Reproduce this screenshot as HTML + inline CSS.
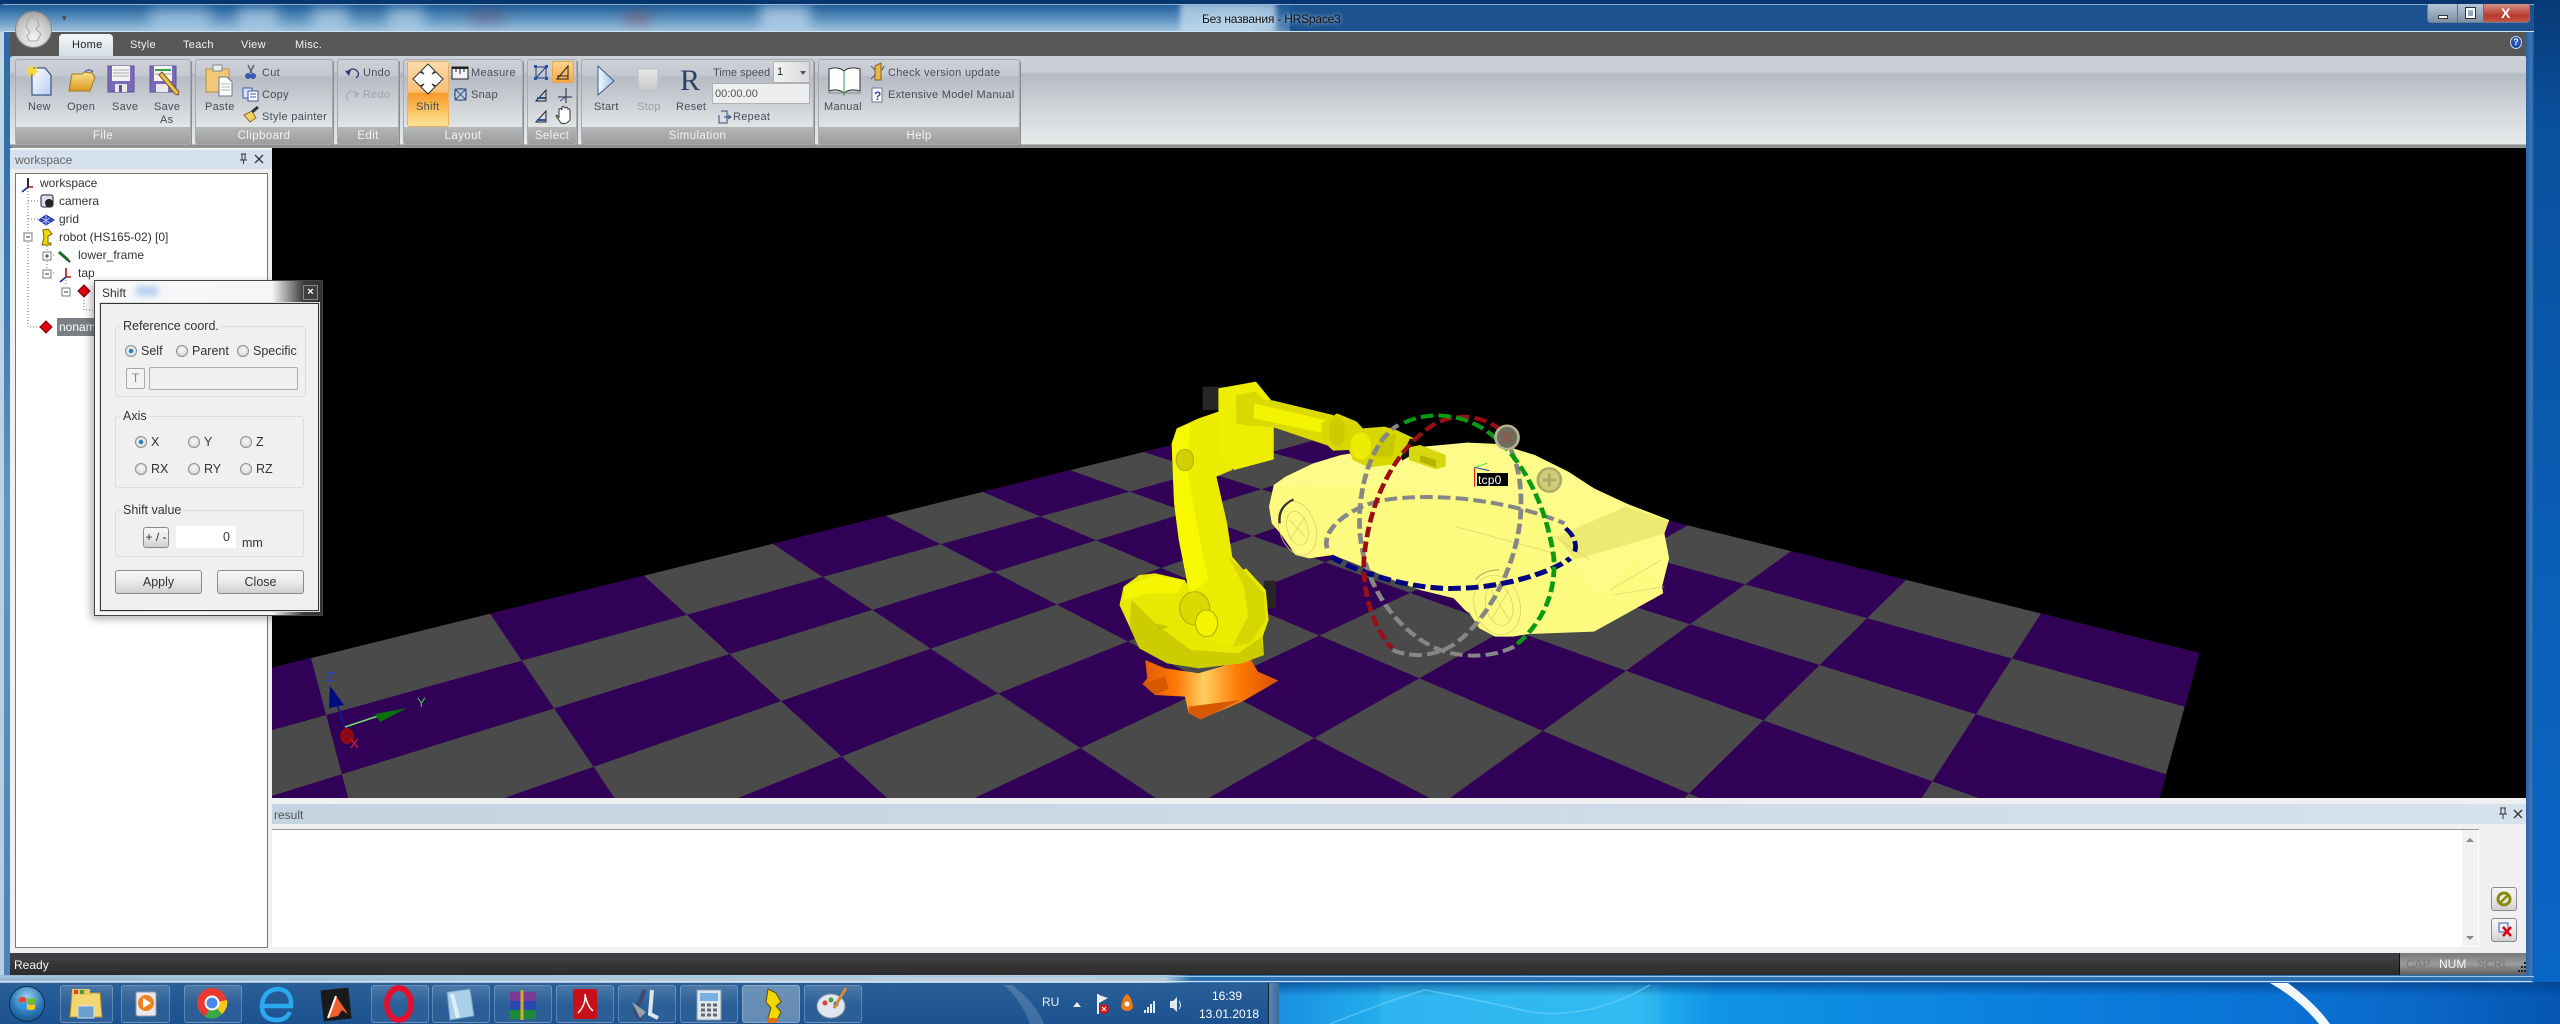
<!DOCTYPE html>
<html><head><meta charset="utf-8"><title>HRSpace3</title>
<style>
html,body{margin:0;padding:0;width:2560px;height:1024px;overflow:hidden;background:#0a6ccf;font-family:"Liberation Sans","Noto Sans CJK SC",sans-serif}
div,span,svg{position:absolute}
.t{white-space:nowrap;line-height:1;font-size:11px;letter-spacing:.3px;color:#454d5a}
.g{top:59px;height:86px;border:1px solid #a8aaae;border-radius:3px;box-sizing:border-box;background:linear-gradient(#cdd0d7 0,#c6c9d1 15px,#b6bbc5 17px,#ced2d6 45px,#e2e6e7 68px);overflow:hidden;box-shadow:1px 1px 0 #8b8d90}
.g b{position:absolute;left:0;right:0;bottom:0;height:17px;background:linear-gradient(#b4b6b8,#9b9d9f);color:#f2f2f2;font:11.5px/18px "Liberation Sans",sans-serif;text-align:center;letter-spacing:.4px}
.tr{font-size:12px;letter-spacing:0;color:#333}
.d{font-size:12.5px;letter-spacing:0;color:#333}
.fs{border:1px solid #dcdcdc;border-radius:3px;box-sizing:border-box}
.r{width:12px;height:12px;border-radius:50%;border:1px solid #8d8d8d;box-sizing:border-box;background:radial-gradient(circle at 50% 40%,#f8f8f8,#cfcfcf)}
.r.on{background:radial-gradient(circle,#1b6ea8 0,#2f8fc8 28%,#e8e8e8 36%,#dcdcdc)}
.btn{border:1px solid #8a8a8a;border-radius:3px;box-sizing:border-box;background:linear-gradient(#f6f6f6 0,#ececec 45%,#cfcfcf 100%);text-align:center;font-size:12.5px;color:#333}
.tb{top:985px;height:38px;width:58px;border:1px solid rgba(255,255,255,.24);border-radius:3px;box-sizing:border-box;background:linear-gradient(rgba(255,255,255,.16),rgba(255,255,255,.04) 55%,rgba(255,255,255,.08))}
</style></head><body>

<!-- desktop bottom right -->
<div style="left:1279px;top:975px;width:1281px;height:49px;background:linear-gradient(90deg,#1a90e2 0,#24b2ef 9%,#27b8f3 28%,#1094e6 34%,#0b7edc 60%,#0a73d4 78%,#0a66c6 90%,#0556b2 100%)"></div>
<div style="left:1279px;top:982px;width:1281px;height:14px;background:linear-gradient(rgba(3,60,130,.65),rgba(3,60,130,0))"></div>
<svg style="left:1279px;top:975px" width="1281" height="49" viewBox="1279 975 1281 49">
<path d="M2270,983 L2288,983 Q2316,1004 2330,1024 L2319,1024 Q2300,1000 2270,983Z" fill="#f2f8fd"/>
<path d="M1330,1024 Q1390,1000 1425,990 Q1480,1000 1530,1012 Q1590,1020 1650,985" fill="none" stroke="#6fd2f8" stroke-width="1.5" opacity=".6"/>
<path d="M1380,985 L1660,985 L1660,1024 L1380,1024Z" fill="#fff" opacity=".05"/>
</svg>
<div style="left:2534px;top:0;width:26px;height:982px;background:linear-gradient(#073a75 0,#0a4f9c 12%,#0a5fb8 60%,#0a66c6 100%)"></div>

<!-- title / glass -->
<div style="left:0;top:0;width:2534px;height:32px;overflow:hidden;background:#1c5290;">
 <div style="left:0;top:0;width:1290px;height:32px;background:linear-gradient(#1a5592 0,#2a679f 25%,#6fa0c9 70%,#a5c6e0 100%)"></div>
 <div style="left:1250px;top:0;width:220px;height:32px;background:linear-gradient(90deg,rgba(28,82,144,0),#1c5290 30%)"></div>
 <div style="left:150px;top:8px;width:60px;height:22px;background:#c8e0f2;filter:blur(7px);opacity:.5"></div>
 <div style="left:238px;top:8px;width:40px;height:22px;background:#c8e0f2;filter:blur(6px);opacity:.55"></div>
 <div style="left:312px;top:8px;width:36px;height:22px;background:#c8e0f2;filter:blur(6px);opacity:.55"></div>
 <div style="left:388px;top:8px;width:36px;height:22px;background:#c8e0f2;filter:blur(6px);opacity:.55"></div>
 <div style="left:470px;top:8px;width:34px;height:16px;background:#704060;filter:blur(7px);opacity:.35"></div>
 <div style="left:625px;top:12px;width:26px;height:12px;background:#a03030;filter:blur(6px);opacity:.35"></div>
 <div style="left:760px;top:5px;width:50px;height:25px;background:#d0e4f4;filter:blur(6px);opacity:.6"></div>
 <div style="left:1180px;top:3px;width:96px;height:30px;background:#c4dcf0;filter:blur(3px);opacity:.75"></div>
 <div style="left:0;top:0;width:2534px;height:4px;background:#07366f"></div>
 <div style="left:4px;top:31px;width:2530px;height:1px;background:#cfe3f3"></div>
</div>
<div style="left:3px;top:4px;width:2531px;height:1px;background:#b9cfe2;opacity:.7"></div>
<div class="t" style="left:1202px;top:13px;font-size:12px;letter-spacing:-.2px;color:#111;text-shadow:0 0 5px #dbeeff">Без названия - HRSpace3</div>
<!-- caption buttons -->
<div style="left:2427px;top:4px;width:103px;height:19px;border:1px solid #6a7f95;border-top:0;border-radius:0 0 4px 4px;box-sizing:border-box;overflow:hidden;background:linear-gradient(#b5c6d6,#7d90a4)">
 <div style="left:56px;top:0;width:47px;height:19px;background:linear-gradient(#d69088,#b83a2e 60%,#c45a48)"></div>
 <div style="left:29px;top:0;width:1px;height:19px;background:#5d7085"></div>
 <div style="left:55px;top:0;width:1px;height:19px;background:#5d7085"></div>
 <div style="left:10px;top:11px;width:10px;height:4px;background:#fff;border:1px solid #333;box-sizing:border-box"></div>
 <div style="left:38px;top:4px;width:9px;height:10px;border:2px solid #fff;outline:1px solid #333;box-sizing:border-box"></div>
 <div class="t" style="left:73px;top:2px;font-size:14px;font-weight:bold;color:#fff;letter-spacing:0">X</div>
</div>

<!-- window left frame -->
<div style="left:0;top:32px;width:4px;height:952px;background:linear-gradient(#c4d6e4,#b7cde0)"></div>
<div style="left:4px;top:32px;width:6px;height:948px;background:linear-gradient(#2a6ba6,#3a7cb6 30%,#5d97c8 50%,#4883bb)"></div>

<!-- ribbon tab row -->
<div style="left:10px;top:32px;width:2517px;height:24px;background:#575757"></div>
<div style="left:59px;top:34px;width:54px;height:22px;border-radius:4px 4px 0 0;background:linear-gradient(#f3f6f8,#d3dee4)"></div>
<div class="t" style="left:72px;top:40px;color:#222">Home</div>
<div class="t" style="left:130px;top:40px;color:#f2f2f2">Style</div>
<div class="t" style="left:183px;top:40px;color:#f2f2f2">Teach</div>
<div class="t" style="left:241px;top:40px;color:#f2f2f2">View</div>
<div class="t" style="left:295px;top:40px;color:#f2f2f2">Misc.</div>
<!-- orb -->
<div style="left:15px;top:11px;width:37px;height:37px;border-radius:50%;background:radial-gradient(circle at 50% 75%,#f4f4f4,#c9c9c9 55%,#8f8f8f);border:1px solid #888;box-sizing:border-box"></div>
<svg style="left:15px;top:11px" width="37" height="37"><path d="M16,5 L22,8 L24,14 L21,18 L26,23 L22,30 L14,30 L12,25 L15,21 L11,16 L13,9Z" fill="none" stroke="#a8a8a8"/></svg>
<div class="t" style="left:62px;top:14px;font-size:9px;color:#444;letter-spacing:0">▾</div>
<!-- help -->
<div style="left:2510px;top:36px;width:12px;height:13px;border-radius:50%;background:radial-gradient(#2a5cc0,#18409c);border:1px solid #c8d8f0;box-sizing:border-box;color:#fff;font:bold 9px/11px 'Liberation Sans',sans-serif;text-align:center">?</div>

<!-- ribbon body -->
<div style="left:10px;top:56px;width:2517px;height:92px;border-radius:3px;background:linear-gradient(#ccd0d8 0,#c8ccd4 16px,#b4bac4 18px,#c6cbd0 40px,#d6dadd 60px,#e6eaeb 88px,#8a8a8a 89px,#999 92px)"></div>
<div class="g" style="left:15px;width:176px"><b>File</b></div>
<div class="g" style="left:195px;width:138px"><b>Clipboard</b></div>
<div class="g" style="left:337px;width:62px"><b>Edit</b></div>
<div class="g" style="left:403px;width:120px"><b>Layout</b></div>
<div class="g" style="left:527px;width:50px"><b>Select</b></div>
<div class="g" style="left:581px;width:233px"><b>Simulation</b></div>
<div class="g" style="left:818px;width:202px"><b>Help</b></div>

<!-- Shift highlight -->
<div style="left:407px;top:61px;width:42px;height:66px;box-sizing:border-box;border:1px solid #e6b25c;border-radius:3px;background:linear-gradient(#fddcaa 0,#f9be74 47%,#f79a2c 49%,#fbc25e 75%,#fee49a 100%)"></div>
<div style="left:552px;top:61px;width:22px;height:22px;box-sizing:border-box;border:1px solid #e0aa50;border-radius:2px;background:linear-gradient(#fcd28e,#f8a840)"></div>

<svg style="left:0;top:56px" width="1040" height="75" viewBox="0 56 1040 75">
<defs>
<linearGradient id="fol" x1="0" y1="0" x2="0" y2="1"><stop offset="0" stop-color="#fbe08a"/><stop offset="1" stop-color="#d89a20"/></linearGradient>
<linearGradient id="pg" x1="0" y1="0" x2="1" y2="1"><stop offset="0" stop-color="#fff"/><stop offset="1" stop-color="#b8ccf0"/></linearGradient>
<linearGradient id="tri" x1="0" y1="0" x2="1" y2="0"><stop offset="0" stop-color="#f4f8fc"/><stop offset="1" stop-color="#a0c0e4"/></linearGradient>
<linearGradient id="sq" x1="0" y1="0" x2="0" y2="1"><stop offset="0" stop-color="#e4e6e8"/><stop offset="1" stop-color="#c8cacc"/></linearGradient>
</defs>
<!-- New -->
<path d="M32,68 L45,68 L51,75 L51,95 L32,95Z" fill="url(#pg)" stroke="#1e3a6e"/>
<path d="M32,65 L34,69 L38,65 L36,70 L39,72 L35,73 L36,77 L32,74 L28,77 L29,73 L25,72 L29,70 L26,65 L30,68Z" fill="#f8d838"/>
<!-- Open -->
<path d="M72,74 L82,74 L84,72 L92,73 L94,76 L95,77 L90,91 L69,91 Z" fill="url(#fol)" stroke="#a07a20"/>
<path d="M85,72 Q89,68 93,72" fill="none" stroke="#5a6aa0" stroke-width="1.5"/>
<!-- Save -->
<path d="M108,66 L134,66 L134,92 L108,92Z" fill="#7a68b8" stroke="#5f5098"/>
<rect x="112" y="66" width="18" height="15" fill="#f4f4f4"/><path d="M113,70H129M113,73H129M113,76H129" stroke="#aaa"/>
<rect x="115" y="84" width="12" height="8" fill="#e8e8e8"/><rect x="119" y="85" width="3" height="7" fill="#5f5098"/>
<!-- Save as -->
<path d="M150,66 L176,66 L176,92 L150,92Z" fill="#7a68b8" stroke="#5f5098"/>
<rect x="154" y="66" width="18" height="15" fill="#f4f4f4"/><path d="M155,70H171" stroke="#38a048" stroke-width="2"/><path d="M155,74H171" stroke="#aaa"/>
<rect x="156" y="84" width="12" height="8" fill="#e8e8e8"/>
<path d="M159,75 L162,72 L179,92 L178,95 L175,94Z" fill="#e8c050" stroke="#805020"/>
<!-- Paste -->
<path d="M206,69 L229,69 L229,92 L206,92Z" fill="#f0c878" stroke="#b89040" rx="2"/>
<rect x="213" y="65" width="9" height="6" fill="#e8eef4" stroke="#888"/>
<path d="M219,77 L227,77 L232,82 L232,96 L219,96Z" fill="#fff" stroke="#6a7a90"/><path d="M221,84H230M221,87H230M221,90H230" stroke="#b0b8c4"/>
<!-- Cut -->
<path d="M248,65 L252,73 M254,65 L250,73" stroke="#5a6478" stroke-width="1.5"/><circle cx="248" cy="76" r="3" fill="#3a5ab0"/><circle cx="253" cy="76" r="3" fill="#3a5ab0"/>
<!-- Copy -->
<rect x="243" y="88" width="9" height="10" fill="#d8e4f8" stroke="#3a5aa0"/><rect x="248" y="91" width="10" height="10" fill="#fff" stroke="#3a5aa0"/><path d="M250,94H256M250,97H256" stroke="#3a5aa0"/>
<!-- Painter -->
<path d="M244,115 L252,111 L256,118 L250,122 Z" fill="#f0d060" stroke="#907020"/><path d="M252,112 L258,107" stroke="#334" stroke-width="3"/>
<!-- Undo redo -->
<path d="M347,73 Q351,67 356,70 Q361,74 356,78" fill="none" stroke="#2a3a70" stroke-width="1.3"/><path d="M345,71 L351,70 L349,76Z" fill="#2a3a70"/>
<path d="M358,95 Q354,89 349,92 Q344,96 349,100" fill="none" stroke="#aab0b4" stroke-width="1.3"/><path d="M360,93 L354,92 L356,98Z" fill="#aab0b4"/>
<!-- Shift arrows -->
<g transform="translate(428 79)"><path d="M0,-15 L7,-8 L4,-5 L8,-7 L15,0 L8,7 L4,5 L7,8 L0,15 L-7,8 L-4,5 L-8,7 L-15,0 L-8,-7 L-4,-5 L-7,-8Z" fill="#fff" stroke="#333"/></g>
<!-- Measure -->
<rect x="452" y="67" width="16" height="12" fill="#f4f4f4" stroke="#222"/><path d="M452,68H468" stroke="#222" stroke-width="2"/><path d="M456,69V72M460,69V74M464,69V72" stroke="#222"/>
<!-- Snap -->
<rect x="455" y="89" width="11" height="11" fill="none" stroke="#3a5a90"/><path d="M455,89 L466,100 M466,89 L455,100" stroke="#3a5a90"/><circle cx="460.5" cy="94.5" r="6" fill="none" stroke="#3a5a90"/>
<!-- Select icons -->
<g fill="none" stroke="#1c3a7a"><rect x="536" y="67" width="10" height="11"/><path d="M536,78 L546,67"/></g><g fill="#2a50a0"><rect x="534" y="65" width="3" height="3"/><rect x="545" y="65" width="3" height="3"/><rect x="534" y="77" width="3" height="3"/><rect x="545" y="77" width="3" height="3"/></g>
<path d="M557,79 L568,66 L568,79Z M557,76H568" fill="none" stroke="#222"/>
<path d="M536,101 L546,90 L546,101Z" fill="none" stroke="#222"/><path d="M537,98H546" stroke="#2a50a0" stroke-width="2"/>
<path d="M566,88 V103 M558,97 H572" stroke="#223" fill="none"/><path d="M566,97 L560,101" stroke="#2a50a0"/>
<path d="M536,122 L546,111 L546,122Z" fill="none" stroke="#222"/><path d="M537,120H546" stroke="#2a50a0" stroke-width="2"/>
<path d="M559,118 L559,109 Q561,108 562,110 L562,107 Q564,106 565,108 Q567,106 568,109 Q570,108 570,111 L570,120 Q566,125 561,123 L556,116 Q557,114 559,118Z" fill="#fff" stroke="#333"/>
<!-- Start / Stop / R -->
<path d="M598,66 L614,81 L598,95Z" fill="url(#tri)" stroke="#3c5c8c"/>
<rect x="638" y="69" width="20" height="22" fill="url(#sq)" stroke="#bcbec0"/>
<!-- repeat -->
<path d="M721,111 H727 V123 H719 V115" fill="none" stroke="#2a4a80"/><path d="M724,117 L730,117 M728,115 L731,117 L728,119" stroke="#2a4a80" fill="none"/>
<!-- Manual book -->
<path d="M829,69 Q838,66 844,71 Q850,66 860,69 L860,91 Q850,88 844,93 Q838,88 829,91Z" fill="#fff" stroke="#333"/><path d="M844,71V96" stroke="#28a048"/><path d="M829,91 L829,93 L860,93 L860,91" stroke="#888" fill="none"/>
<!-- check icon -->
<path d="M875,66 L881,63 L881,80 L875,80Z" fill="#e8b840" stroke="#806020"/><path d="M871,66 L875,70 M884,66 L882,70 M871,79 L875,75" stroke="#556"/>
<!-- ? -->
<rect x="872" y="88" width="10" height="14" fill="#fff" stroke="#6a7a90"/><text x="874" y="100" font-family="Liberation Sans" font-size="12" font-weight="bold" fill="#2850a8">?</text>
</svg>

<div class="t" style="left:28px;top:102px">New</div>
<div class="t" style="left:67px;top:102px">Open</div>
<div class="t" style="left:112px;top:102px">Save</div>
<div class="t" style="left:154px;top:102px">Save</div>
<div class="t" style="left:160px;top:115px">As</div>
<div class="t" style="left:205px;top:102px">Paste</div>
<div class="t" style="left:262px;top:68px">Cut</div>
<div class="t" style="left:262px;top:90px">Copy</div>
<div class="t" style="left:262px;top:112px">Style painter</div>
<div class="t" style="left:363px;top:68px">Undo</div>
<div class="t" style="left:363px;top:90px;color:#a0a4a8">Redo</div>
<div class="t" style="left:416px;top:102px">Shift</div>
<div class="t" style="left:471px;top:68px">Measure</div>
<div class="t" style="left:471px;top:90px">Snap</div>
<div class="t" style="left:594px;top:102px">Start</div>
<div class="t" style="left:637px;top:102px;color:#9a9ea2">Stop</div>
<div class="t" style="left:676px;top:102px">Reset</div>
<div class="t" style="left:680px;top:66px;font:30px/1 'Liberation Serif',serif;color:#2b3f66;letter-spacing:0">R</div>
<div class="t" style="left:713px;top:68px;letter-spacing:0">Time speed</div>
<div style="left:773px;top:61px;width:37px;height:22px;border:1px solid #b0b0b0;box-sizing:border-box;background:linear-gradient(90deg,#f2f2f2,#d8dadc)"></div>
<div class="t" style="left:777px;top:67px;color:#222">1</div>
<div style="left:800px;top:71px;border:3px solid transparent;border-top:4px solid #555"></div>
<div style="left:712px;top:83px;width:98px;height:21px;border:1px solid #b0b0b0;box-sizing:border-box;background:#eceeef"></div>
<div class="t" style="left:715px;top:89px;color:#555;letter-spacing:0">00:00.00</div>
<div class="t" style="left:733px;top:112px">Repeat</div>
<div class="t" style="left:824px;top:102px">Manual</div>
<div class="t" style="left:888px;top:68px">Check version update</div>
<div class="t" style="left:888px;top:90px">Extensive Model Manual</div>

<!-- content background -->
<div style="left:10px;top:148px;width:2517px;height:805px;background:#f0f0f0"></div>

<!-- left panel -->
<div style="left:10px;top:150px;width:262px;height:19px;background:#d5e1ec"></div>
<div class="t tr" style="left:15px;top:154px;color:#666">workspace</div>
<svg style="left:236px;top:152px" width="30" height="14"><path d="M5,2H10M6,2V8M9,2V8M4,8H11M7.5,8V12" stroke="#333" fill="none"/><path d="M19,3 L27,11 M27,3 L19,11" stroke="#333" stroke-width="1.3"/></svg>
<div style="left:15px;top:173px;width:253px;height:775px;border:1px solid #777;box-sizing:border-box;background:#fff"></div>
<svg style="left:15px;top:173px" width="90" height="165" viewBox="15 173 90 165">
<g fill="none" stroke="#777" stroke-dasharray="1 2">
<path d="M28,188 V327 H40"/><path d="M28,201 H40 M28,219 H40"/><path d="M47,246 V273 M47,255 H55 M47,273 H55"/><path d="M66,280 V286 M84,300 V310 H94"/>
</g>
<!-- workspace axes -->
<path d="M28,178 V187 H33" fill="none" stroke="#b01010" stroke-width="1.6"/><path d="M28,187 L22,192" stroke="#1030a0" stroke-width="1.6"/><path d="M28,178 V187" stroke="#111" stroke-width="1.6"/>
<!-- camera -->
<rect x="41" y="195" width="12" height="12" rx="2" fill="#dde" stroke="#222"/><circle cx="49" cy="203" r="4" fill="#222"/>
<!-- grid -->
<path d="M39,220 L46,215 L54,220 L46,225Z" fill="#3848c8" stroke="#2030a0"/>
<path d="M42,218L50,223M46,215V225M50,218L42,223" stroke="#b8c0f0"/>
<!-- robot -->
<path d="M43,230 L48,229 L52,234 L48,236 L48,243 L51,243 V245 H42 L44,238 Z" fill="#f0d800" stroke="#806000"/>
<rect x="24" y="233" width="8" height="8" fill="#fff" stroke="#778"/><path d="M26,237H30" stroke="#333"/>
<!-- lower_frame -->
<rect x="43" y="252" width="8" height="8" fill="#fff" stroke="#778"/><path d="M45,256H49M47,254V258" stroke="#333"/>
<path d="M59,252 L68,260" stroke="#187028" stroke-width="3"/><path d="M68,260 L70,262" stroke="#333" stroke-width="2"/>
<!-- tap -->
<rect x="43" y="270" width="8" height="8" fill="#fff" stroke="#778"/><path d="M45,274H49" stroke="#333"/>
<path d="M66,268 V277 H71" fill="none" stroke="#b01010" stroke-width="1.6"/><path d="M66,277 L60,282" stroke="#1030a0" stroke-width="1.6"/>
<!-- diamond -->
<rect x="62" y="288" width="8" height="8" fill="#fff" stroke="#778"/><path d="M64,292H68" stroke="#333"/>
<path d="M84,285 L90,291 L84,297 L78,291Z" fill="#e00010" stroke="#700"/>
<path d="M46,321 L52,327 L46,333 L40,327Z" fill="#e00010" stroke="#700"/>
</svg>
<div class="t tr" style="left:40px;top:177px">workspace</div>
<div class="t tr" style="left:59px;top:195px">camera</div>
<div class="t tr" style="left:59px;top:213px">grid</div>
<div class="t tr" style="left:59px;top:231px">robot (HS165-02) [0]</div>
<div class="t tr" style="left:78px;top:249px">lower_frame</div>
<div class="t tr" style="left:78px;top:267px">tap</div>
<div style="left:57px;top:318px;width:60px;height:18px;background:#7b8087"></div>
<div class="t tr" style="left:59px;top:321px;color:#fff">noname</div>

<!-- 3D viewport -->
<div style="left:272px;top:148px;width:2254px;height:650px;background:#000;overflow:hidden">
<svg style="left:-272px;top:-148px" width="2560" height="1024" viewBox="0 0 2560 1024">
<defs>
<clipPath id="floor"><polygon points="1269,421 2199.5,653 2104,1000 0,1000 0,735"/></clipPath>
<linearGradient id="org" gradientUnits="userSpaceOnUse" x1="160" y1="0" x2="500" y2="0"><stop offset="0" stop-color="#e05a00"/><stop offset=".25" stop-color="#ff7a08"/><stop offset=".45" stop-color="#ffd060"/><stop offset=".7" stop-color="#ff7c04"/><stop offset="1" stop-color="#d85000"/></linearGradient>
</defs>
<g clip-path="url(#floor)">
<rect x="0" y="400" width="2300" height="600" fill="#4a4a4a"/>
<path fill="#310057" fill-rule="evenodd" d="
M175,147 L3238,1000 L2883,1000Z
M175,147 L2538,1000 L2173,1000Z
M175,147 L1819,1000 L1460,1000Z
M175,147 L1108,1000 L751,1000Z
M175,147 L402,1000 L100,1000Z
M2337,156 L-699,1000 L-387,1000Z
M2337,156 L-72,1000 L235,1000Z
M2337,156 L546,1000 L854,1000Z
M2337,156 L1171,1000 L1479,1000Z
M2337,156 L1791,1000 L2104,1000Z"/>
</g>
<!-- axis -->
<path d="M345,727 L332,690" stroke="#1018a0" stroke-width="1.5"/>
<path d="M330,686 L329,708 L344,705Z" fill="#000a80"/>
<path d="M345,727 L378,716" stroke="#70e070" stroke-width="1.5"/>
<path d="M407,708 L375,714 L380,722Z" fill="#0a700a"/>
<ellipse cx="347" cy="736" rx="7" ry="8" fill="#8c0a14"/>
<text x="326" y="681" font-family="Liberation Sans" font-size="13" fill="#2040e0">Z</text>
<text x="417" y="707" font-family="Liberation Sans" font-size="13" fill="#30d050">Y</text>
<text x="350" y="748" font-family="Liberation Sans" font-size="13" fill="#f02020">X</text>

<g transform="translate(1080 360) scale(.3954 .3333)">
<!-- car -->
<path fill="#fcfb80" d="M478,440 L490,375 L520,350 L590,310 L660,285 L700,278 L880,265 L980,248 L1060,252 L1150,285 L1235,335 L1300,385 L1385,432 L1490,480 L1478,520 L1490,595 L1472,680 L1475,700 L1300,815 L1135,822 L1095,830 L1050,830 L1010,805 L985,760 L975,752 L945,715 L860,690 L780,655 L725,625 L640,585 L580,595 L545,585 L510,525 L485,490 Z"/>
<path fill="#fdfc8a" d="M490,375 L590,310 L700,278 L980,248 L1150,285 L1300,385 L1380,435 L1250,515 L1100,440 L800,380 L640,380 Z"/>
<path fill="#ecea70" d="M1205,530 L1380,440 L1490,482 L1475,520 L1350,580 L1250,598Z"/>
<path fill="#fdfc88" d="M1250,600 L1475,522 L1488,595 L1470,680 L1400,600 L1330,680 L1300,700 Z"/>
<g fill="none" stroke="#d4d268" stroke-width="2">
<path d="M1340,690 L1470,600 M1350,705 L1478,680 M1200,530 L1290,600 M950,500 L1200,580"/>
<ellipse cx="550" cy="505" rx="46" ry="82" transform="rotate(-12 550 505)"/><ellipse cx="550" cy="505" rx="26" ry="52" transform="rotate(-12 550 505)"/>
<ellipse cx="1055" cy="735" rx="58" ry="90" transform="rotate(-10 1055 735)"/><ellipse cx="1060" cy="735" rx="34" ry="62" transform="rotate(-10 1060 735)"/>
<path d="M530,480 L570,530 M570,470 L530,540 M1040,690 L1085,780 M1085,690 L1040,780"/>
</g>
<path d="M540,418 Q500,440 505,490" fill="none" stroke="#333" stroke-width="6"/>
<path d="M1000,660 Q1020,630 1060,630" fill="none" stroke="#aaa860" stroke-width="3"/>

<!-- base -->
<path fill="url(#org)" d="M158,972 L170,955 L165,900 L215,925 L300,940 L430,895 L450,935 L502,962 L410,1025 L340,1060 L305,1078 L275,1060 L265,1010 L190,1005 Z"/>
<path fill="#d85800" d="M275,1040 L405,1020 L340,1060 L305,1078 L275,1060Z M158,972 L215,950 L225,985 L190,1005Z"/>

<!-- motors -->
<rect x="310" y="80" width="55" height="70" fill="#262626"/>
<rect x="465" y="662" width="30" height="82" fill="#262626"/>

<!-- J1 -->
<path fill="#e8e800" d="M100,735 L110,680 L150,645 L190,640 L265,660 L285,700 L420,625 L470,690 L477,780 L462,830 L465,885 L410,910 L300,925 L220,910 L150,865 L125,800 Z"/>
<path fill="#cccc00" d="M130,720 L200,800 L280,870 L400,880 L460,830 L465,885 L410,910 L300,925 L220,910 L150,865 L125,800 Z"/>
<path fill="#f6f600" d="M112,680 L190,645 L265,665 L245,700 L170,700 L110,720Z"/>
<path fill="#c4c400" d="M185,790 L225,800 L205,810Z"/>
<!-- link -->
<path fill="#ecec00" d="M232,250 L245,205 L300,175 L350,155 L385,330 L345,350 L372,490 L385,590 L420,640 L465,700 L470,780 L430,850 L350,860 L280,800 L270,660 L250,540 L238,430 Z"/>
<path fill="#f8f800" d="M232,250 L245,205 L280,190 L270,320 L300,520 L325,660 L280,700 L270,660 L250,540 L238,430Z"/>
<path fill="#d6d600" d="M375,590 L420,640 L465,700 L470,780 L430,850 L385,860 L425,770 L415,680Z"/>
<ellipse cx="290" cy="745" rx="38" ry="50" fill="#dada00" stroke="#b0b000" stroke-width="3"/>
<ellipse cx="320" cy="790" rx="28" ry="40" fill="#f4f400" stroke="#b0b000" stroke-width="3"/>
<ellipse cx="265" cy="300" rx="22" ry="32" fill="#d0d000" stroke="#b0b000" stroke-width="3"/>
<!-- J3 -->
<path fill="#eeee00" d="M350,85 L445,65 L490,130 L490,298 L390,330 L350,300 Z"/>
<path fill="#d8d800" d="M395,105 L445,95 L470,125 L430,200 L395,190Z"/>
<!-- forearm -->
<path fill="#dada00" d="M425,112 L490,122 L640,165 L640,262 L490,202 L420,195Z"/>
<path fill="#f4f400" d="M440,130 L625,182 L625,222 L440,175Z"/>
<!-- wrist -->
<path fill="#d8d800" d="M610,190 L650,160 L700,185 L715,205 L770,200 L800,210 L845,235 L815,290 L800,312 L730,322 L690,300 L680,270 L640,272 L612,240 Z"/>
<ellipse cx="710" cy="258" rx="26" ry="40" fill="#ecec00"/>
<ellipse cx="650" cy="215" rx="20" ry="45" fill="#cccc00"/>
<path d="M760,225 L800,225 L790,290 L745,290Z" fill="#c8c800"/>
<path fill="#111" d="M812,290 L835,235 L848,240 L832,290 L815,302Z"/>
<path fill="#d8d810" d="M832,262 L860,255 L925,285 L925,320 L900,328 L832,300 Z"/>
<path fill="#b4b400" d="M860,285 L900,300 L900,322 L860,305Z"/>

<!-- rings -->
<g fill="none" stroke-width="12" stroke-dasharray="32 13">
<path stroke="#868686" d="M625,565 C610,510 680,440 770,420 C880,400 1060,410 1225,490"/>
<path stroke="#868686" d="M790,870 C840,895 900,890 950,850 C1040,770 1110,600 1115,450 C1118,350 1100,280 1075,240"/>
<path stroke="#868686" d="M1098,860 C1040,895 960,895 900,865 C800,810 720,680 708,520 C700,380 740,240 805,195"/>
<path stroke="#000080" stroke-width="15" d="M635,590 C720,650 860,690 950,685 C1060,685 1190,640 1240,595"/>
<path stroke="#000080" d="M1228,505 C1255,530 1260,570 1245,585"/>
<path stroke="#9a0f16" d="M1065,210 C1020,170 960,155 900,190 C800,260 730,420 718,600 C715,710 745,810 790,865"/>
<path stroke="#0a9a14" d="M820,188 C870,160 930,160 985,185 C1090,235 1175,400 1198,590 C1205,700 1170,790 1098,860"/>
</g>
<!-- handles -->
<ellipse cx="1080" cy="232" rx="29" ry="35" fill="#6e6e5e" stroke="#b4b490" stroke-width="7"/>
<path d="M1066,216 L1094,248 M1094,216 L1066,248" stroke="#8a5a50" stroke-width="9"/>
<ellipse cx="1187" cy="360" rx="29" ry="35" fill="#d0cc78" stroke="#aeaa68" stroke-width="7"/>
<path d="M1187,340 V380 M1170,360 H1204" stroke="#aeaa68" stroke-width="8"/>
<!-- tcp axes -->
<path d="M998,322 V380" stroke="#e02020" stroke-width="3"/><path d="M998,322 L1035,332" stroke="#2030c0" stroke-width="3"/><path d="M998,322 L1030,310" stroke="#40e040" stroke-width="3"/>
</g>
</svg>
<div style="left:1205px;top:325px;width:31px;height:13px;background:#000"></div>
<div class="t" style="left:1206px;top:326px;font-size:12px;color:#fff;letter-spacing:.2px">tcp0</div>
</div>

<!-- dialog -->
<div style="left:94px;top:280px;width:229px;height:336px;background:linear-gradient(90deg,#f8f8fa 0,#f4f6f8 78%,#3a3a3a 92%,#333 100%);border:1px solid #444;box-sizing:border-box;box-shadow:-3px 3px 8px rgba(0,0,0,.3)"></div>
<div class="d" style="left:102px;top:286px;font-size:12px">Shift</div>
<div style="left:136px;top:286px;width:22px;height:10px;background:#b8d0f0;filter:blur(3px)"></div>
<div style="left:303px;top:285px;width:15px;height:15px;background:#3f3f3f;border:1px solid #888;box-sizing:border-box;color:#fff;font:bold 11px/12px 'Liberation Sans',sans-serif;text-align:center">×</div>
<div style="left:100px;top:303px;width:219px;height:308px;background:#f0f0f0;border:1px solid #333;box-sizing:border-box;outline:1px solid #ddd"></div>

<div class="fs" style="left:115px;top:326px;width:191px;height:71px"></div>
<div class="d" style="left:121px;top:319px;background:#f0f0f0;padding:0 2px;font-size:12.5px">Reference coord.</div>
<div class="r on" style="left:125px;top:345px"></div><div class="d" style="left:141px;top:344px">Self</div>
<div class="r" style="left:176px;top:345px"></div><div class="d" style="left:192px;top:344px">Parent</div>
<div class="r" style="left:237px;top:345px"></div><div class="d" style="left:253px;top:344px">Specific</div>
<div style="left:126px;top:368px;width:19px;height:21px;border:1px solid #aaa;border-radius:2px;box-sizing:border-box;background:#f2f2f2;color:#888;font-size:12px;line-height:19px;text-align:center">T</div>
<div style="left:149px;top:367px;width:149px;height:23px;border:1px solid #aaa;border-radius:2px;box-sizing:border-box;background:#f0f0f0"></div>

<div class="fs" style="left:115px;top:416px;width:189px;height:72px"></div>
<div class="d" style="left:121px;top:409px;background:#f0f0f0;padding:0 2px">Axis</div>
<div class="r on" style="left:135px;top:436px"></div><div class="d" style="left:151px;top:435px">X</div>
<div class="r" style="left:188px;top:436px"></div><div class="d" style="left:204px;top:435px">Y</div>
<div class="r" style="left:240px;top:436px"></div><div class="d" style="left:256px;top:435px">Z</div>
<div class="r" style="left:135px;top:463px"></div><div class="d" style="left:151px;top:462px">RX</div>
<div class="r" style="left:188px;top:463px"></div><div class="d" style="left:204px;top:462px">RY</div>
<div class="r" style="left:240px;top:463px"></div><div class="d" style="left:256px;top:462px">RZ</div>

<div class="fs" style="left:115px;top:510px;width:189px;height:47px"></div>
<div class="d" style="left:121px;top:503px;background:#f0f0f0;padding:0 2px">Shift value</div>
<div class="btn" style="left:143px;top:527px;width:26px;height:21px;line-height:19px;font-size:12px">+ / -</div>
<div style="left:176px;top:526px;width:60px;height:22px;background:#fff"></div>
<div class="d" style="left:223px;top:530px">0</div>
<div class="d" style="left:242px;top:536px">mm</div>
<div class="btn" style="left:115px;top:570px;width:87px;height:24px;line-height:22px">Apply</div>
<div class="btn" style="left:217px;top:570px;width:87px;height:24px;line-height:22px">Close</div>

<!-- result panel -->
<div style="left:272px;top:804px;width:2254px;height:20px;background:linear-gradient(90deg,#c5d3e1,#d5e1ec)"></div>
<div class="t tr" style="left:274px;top:809px;color:#555">result</div>
<svg style="left:2496px;top:806px" width="30" height="16"><path d="M4,2H10M5,2V8M9,2V8M3,8H11M7,8V13" stroke="#333" fill="none"/><path d="M18,4 L26,12 M26,4 L18,12" stroke="#333" stroke-width="1.3"/></svg>
<div style="left:272px;top:829px;width:2207px;height:118px;background:#fff;border-top:1px solid #999;box-sizing:border-box"></div>
<div style="left:2462px;top:830px;width:16px;height:116px;background:#f2f2f2"></div>
<div style="left:2466px;top:838px;border:4px solid transparent;border-bottom:4px solid #888;border-top:0"></div>
<div style="left:2466px;top:936px;border:4px solid transparent;border-top:4px solid #888;border-bottom:0"></div>
<div class="btn" style="left:2491px;top:887px;width:26px;height:24px"></div>
<div class="btn" style="left:2491px;top:918px;width:26px;height:24px"></div>
<svg style="left:2491px;top:887px" width="26" height="55"><circle cx="13" cy="12" r="6" fill="none" stroke="#8a8a10" stroke-width="3"/><path d="M9,16 L17,8" stroke="#8a8a10" stroke-width="2.5"/><rect x="8" y="36" width="9" height="9" fill="none" stroke="#3a60b0"/><path d="M12,40 L20,49 M20,40 L12,49" stroke="#e00010" stroke-width="2.5"/></svg>

<!-- status bar -->
<div style="left:10px;top:953px;width:2516px;height:22px;background:linear-gradient(#3e3f44 0,#3e3f44 35%,#3a3a3a 37%,#2c2c2c 100%)"></div>
<div class="t" style="left:14px;top:959px;color:#f4f4f4;font-size:12px;letter-spacing:0">Ready</div>
<div style="left:2399px;top:953px;width:129px;height:22px;border-left:1px solid #111;box-sizing:border-box;background:linear-gradient(#76787a,#9a9c9e 50%,#5c5e60)"></div>
<div class="t" style="left:2406px;top:958px;color:#777;font-size:12px;letter-spacing:0">CAP</div>
<div class="t" style="left:2439px;top:958px;color:#f6f6f6;font-size:12px;letter-spacing:0">NUM</div>
<div class="t" style="left:2477px;top:958px;color:#777;font-size:12px;letter-spacing:0">SCRL</div>
<svg style="left:2516px;top:960px" width="12" height="14"><g fill="#222"><rect x="8" y="2" width="2" height="2"/><rect x="5" y="6" width="2" height="2"/><rect x="8" y="6" width="2" height="2"/><rect x="2" y="10" width="2" height="2"/><rect x="5" y="10" width="2" height="2"/><rect x="8" y="10" width="2" height="2"/></g></svg>

<!-- frames -->
<div style="left:2526px;top:32px;width:8px;height:950px;background:linear-gradient(90deg,#2a64a8,#3a78b8 70%,#1c4f8c)"></div>
<div style="left:0;top:975px;width:2534px;height:8px;background:linear-gradient(90deg,#9ab8d0 0,#c0cfdc 40%,#b6cadb 46%,#2e72b4 47%,#2e6fb2 100%)"></div>
<div style="left:0;top:976px;width:2534px;height:1px;background:#9ccaea"></div>
<div style="left:0;top:981px;width:2532px;height:1px;background:#cfe6f6"></div>

<!-- taskbar -->
<div style="left:0;top:983px;width:1279px;height:41px;background:linear-gradient(#2a6098 0,#235a94 40%,#1c5290 100%)"></div>
<svg style="left:1000px;top:983px" width="60" height="41"><path d="M4,2 L12,2 Q36,20 44,41 L30,41 Q22,18 4,2Z" fill="#fff" opacity=".16"/></svg>
<div style="left:1268px;top:983px;width:11px;height:41px;background:linear-gradient(90deg,#5a88b4,#3c6a9a);border-left:1px solid #123;box-sizing:border-box"></div>
<div style="left:9px;top:986px;width:36px;height:36px;border-radius:50%;background:radial-gradient(circle at 50% 30%,#9cd0ee,#2a78b8 55%,#10406e);border:1px solid #0c3050;box-sizing:border-box"></div>
<svg style="left:18px;top:995px" width="18" height="18"><path d="M1,3 Q4,1 8,3 L8,8 Q4,6 1,8Z" fill="#f04020"/><path d="M9,3 Q13,5 17,3 L17,8 Q13,10 9,8Z" fill="#70c020"/><path d="M1,9 Q4,7 8,9 L8,14 Q4,12 1,14Z" fill="#2898e8"/><path d="M9,9 Q13,11 17,9 L17,14 Q13,16 9,14Z" fill="#f8c818"/></svg>

<div class="tb" style="left:60px;width:53px"></div>
<div class="tb" style="left:121px;width:49px"></div>
<div class="tb" style="left:184px"></div>
<div class="tb" style="left:371px"></div>
<div class="tb" style="left:432px"></div>
<div class="tb" style="left:494px"></div>
<div class="tb" style="left:556px"></div>
<div class="tb" style="left:618px"></div>
<div class="tb" style="left:680px"></div>
<div class="tb" style="left:742px;background:rgba(255,255,255,.32)"></div>
<div class="tb" style="left:804px"></div>

<svg style="left:0;top:983px" width="1279" height="41" viewBox="0 983 1279 41">
<!-- explorer -->
<path d="M72,993 L100,993 L102,1017 L70,1017Z" fill="#f4d670" stroke="#b89030"/><rect x="78" y="1006" width="16" height="12" fill="#6aa0d0" stroke="#dde"/><rect x="72" y="989" width="18" height="6" fill="#e8c860"/><path d="M74,990h4v4h-4z" fill="#e04030"/><path d="M80,990h4v4h-4z" fill="#40a040"/>
<!-- media -->
<rect x="136" y="992" width="20" height="24" rx="2" fill="#e8e8ec" stroke="#99a"/><circle cx="146" cy="1003" r="8" fill="#f08020"/><path d="M143,998 L151,1003 L143,1008Z" fill="#fff"/>
<!-- chrome -->
<circle cx="212" cy="1003" r="15" fill="#e83a30"/><path d="M212,1003 L225,1010 A15,15 0 0 1 205,1017Z" fill="#3aa848"/><path d="M212,1003 L227,1000 A15,15 0 0 1 222,1014Z" fill="#f8c818"/><circle cx="212" cy="1003" r="6.5" fill="#4a88ec" stroke="#fff" stroke-width="2"/>
<!-- IE -->
<path d="M264,1006 H291 Q292,990 278,989 Q263,990 262,1006 Q262,1020 277,1020 Q286,1020 290,1012" fill="none" stroke="#2aa8f0" stroke-width="4.5"/>
<!-- cursor app -->
<rect x="322" y="989" width="28" height="31" fill="#1a1a1a" transform="rotate(-6 336 1004)"/><path d="M328,1018 L336,996 L348,1014 L342,1010 L338,1016Z" fill="#f06030"/><path d="M328,1018 L336,996" stroke="#fff" stroke-width="2"/>
<!-- opera -->
<ellipse cx="399" cy="1004" rx="12" ry="16" fill="none" stroke="#e01030" stroke-width="6"/>
<!-- notepad -->
<path d="M447,992 L470,989 L474,1016 L450,1020Z" fill="#a8d0e8" stroke="#6a9ac0"/><path d="M452,994 L458,1018" stroke="#e0f0fa" stroke-width="4"/>
<!-- winrar -->
<rect x="510" y="992" width="26" height="9" fill="#7a3a98"/><rect x="510" y="1001" width="26" height="9" fill="#2848b0"/><rect x="510" y="1010" width="26" height="9" fill="#1a8a38"/><path d="M522,990 V1020" stroke="#d8a830" stroke-width="3"/>
<!-- acrobat -->
<rect x="573" y="989" width="24" height="30" rx="2" fill="#c81018"/><path d="M578,1013 Q586,1005 585,994 Q587,1006 593,1011" fill="none" stroke="#fff" stroke-width="1.5"/>
<!-- java-like -->
<path d="M645,990 L635,1012 L642,1020" fill="none" stroke="#3a4a70" stroke-width="4"/><path d="M652,990 L650,1014 L658,1018" fill="none" stroke="#dfe6ee" stroke-width="4"/><path d="M632,1002 L640,1018 L646,1012" fill="#9aa0a8"/>
<!-- calc -->
<rect x="697" y="990" width="24" height="30" fill="#dfe7ef" stroke="#8a9aaa"/><rect x="700" y="993" width="18" height="8" fill="#78b0e0"/><path d="M701,1005h4M707,1005h4M713,1005h4M701,1010h4M707,1010h4M713,1010h4M701,1015h4M707,1015h4M713,1015h4" stroke="#667" stroke-width="3"/>
<!-- hrspace -->
<path d="M768,989 L776,993 L781,1002 L776,1006 L781,1012 L776,1022 L768,1018 L771,1008 L766,1002Z" fill="#f0d800" stroke="#605000"/><path d="M768,1018 L779,1018 L776,1023 L768,1023Z" fill="#e07010"/>
<!-- paint -->
<ellipse cx="831" cy="1006" rx="14" ry="12" fill="#dfe6ee" stroke="#8a98a8"/><circle cx="825" cy="1003" r="2.5" fill="#e04030"/><circle cx="831" cy="1000" r="2.5" fill="#40a040"/><circle cx="836" cy="1004" r="2.5" fill="#3060d0"/><path d="M834,1008 L846,988" stroke="#d8882c" stroke-width="3"/>
<!-- tray -->
<path d="M1073,1007 L1077,1002 L1081,1007Z" fill="#e8eef4"/>
<path d="M1098,994 V1014" stroke="#eee" stroke-width="2"/><path d="M1099,995 L1108,998 L1099,1003Z" fill="#eee"/><circle cx="1104" cy="1009" r="5" fill="#d01818"/><path d="M1102,1007 L1106,1011 M1106,1007 L1102,1011" stroke="#fff"/>
<path d="M1121,1008 Q1122,997 1127,994 Q1132,997 1133,1008 Q1127,1014 1121,1008Z" fill="#f07a10"/><circle cx="1127" cy="1004" r="2.5" fill="#fff"/>
<path d="M1144,1010h2v3h-2zM1147,1007h2v6h-2zM1150,1004h2v9h-2zM1153,1001h2v12h-2z" fill="#e8eef4"/>
<path d="M1170,1001h3l4,-4v15l-4,-4h-3z" fill="#dfe8f0"/><path d="M1179,1001 Q1182,1005 1179,1009" fill="none" stroke="#dfe8f0"/>
</svg>
<div class="t" style="left:1042px;top:996px;color:#e8eef4;font-size:12px;letter-spacing:0">RU</div>
<div class="t" style="left:1212px;top:990px;color:#fff;font-size:12px;letter-spacing:0">16:39</div>
<div class="t" style="left:1199px;top:1008px;color:#fff;font-size:12px;letter-spacing:0">13.01.2018</div>
</body></html>
